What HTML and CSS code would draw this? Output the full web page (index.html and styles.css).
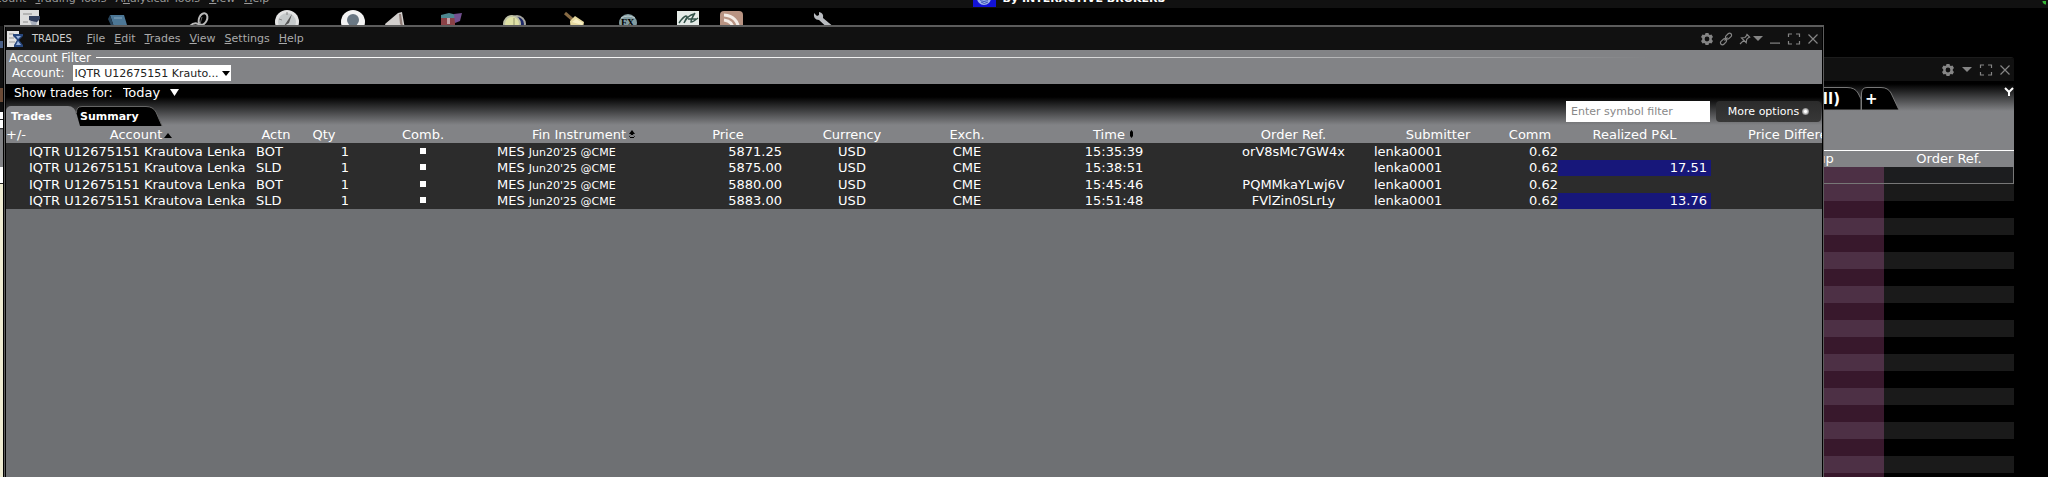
FILE: index.html
```
<!DOCTYPE html>
<html lang="en">
<head>
    <meta charset="UTF-8">
    <meta name="viewport" content="width=device-width, initial-scale=1.0">
    <title>Trades</title>
    <link rel="stylesheet" href="styles.css">
</head>
<body>
    <svg class="sprite" width="0" height="0" aria-hidden="true">
        <symbol id="gear" viewBox="0 0 14 14">
            <path fill="currentColor" fill-rule="evenodd" d="M5.5 1h3l.4 1.6 1 .5 1.6-.6 1.5 2.6-1.2 1.2v1.4l1.2 1.2-1.5 2.6-1.6-.6-1 .5-.4 1.6h-3l-.4-1.6-1-.5-1.6.6L1 8.900l1.200-1.200V6.300L1 5.100l1.500-2.600 1.600.6 1-.5zM7 4.600a2.400 2.400 0 1 0 0 4.800a2.400 2.400 0 0 0 0-4.800z"/>
        </symbol>
        <symbol id="link" viewBox="0 0 14 14">
            <g fill="none" stroke="currentColor" stroke-width="1.200">
                <rect x="6" y="2.200" width="7" height="4" rx="2" transform="rotate(-45 9.500 4.200)"/>
                <rect x="1" y="7.800" width="7" height="4" rx="2" transform="rotate(-45 4.500 9.800)"/>
                <path d="M5.500 8.500l3-3"/>
            </g>
        </symbol>
        <symbol id="pin" viewBox="0 0 14 14">
            <path fill="none" stroke="currentColor" stroke-width="1.200" d="M8.500 2l3.700 3.700M9.300 2.800L7 5.500l-3.500.5 4.700 4.700.500-3.500 2.700-2.300M5.700 8.300L2 12"/>
        </symbol>
        <symbol id="down" viewBox="0 0 10 14"><path fill="currentColor" d="M0 4h10l-5 5z"/></symbol>
        <symbol id="minimize" viewBox="0 0 14 14"><path fill="currentColor" d="M2 10.500h10v1.200H2z"/></symbol>
        <symbol id="expand" viewBox="0 0 14 14">
            <path fill="none" stroke="currentColor" stroke-width="1.200" d="M1.500 5V2H5M9 2h3.500v3M12.500 9v3H9M5 12H1.500V9"/>
        </symbol>
        <symbol id="close" viewBox="0 0 14 14">
            <path fill="none" stroke="currentColor" stroke-width="1.200" d="M2.500 2.500l9 9M11.500 2.500l-9 9"/>
        </symbol>
    </svg>

    <div class="desktop">
        <header class="app-bar">
            <nav class="app-menu">
                <a href="#">Account</a>
                <a href="#"><u>T</u>rading Tools</a>
                <a href="#">A<u>n</u>alytical Tools</a>
                <a href="#"><u>V</u>iew</a>
                <a href="#"><u>H</u>elp</a>
            </nav>
            <div class="brand">
                <svg width="23" height="14" viewBox="0 0 23 14"><path fill="#1212d8" d="M0 0h23v14H0z"/><circle cx="11" cy="5" r="7" fill="#9fb4ea"/><path d="M6 6q5 5 10 0M8 9q3 3 7 0" stroke="#3d55b8" fill="none"/></svg>
                <span>By INTERACTIVE BROKERS</span>
            </div>
            <span class="status"></span>
        </header>

        <div class="toolbar">
            <button aria-label="Orders"><svg width="24" height="24"><path fill="#dcdcdc" d="M2 0h19v24H2z"/><path stroke="#8c8c8c" d="M5 4h9M5 12h5"/><path fill="#33405e" d="M11 6h11v3l-4 4-7-3z"/><path fill="#a9b0bd" d="M12 11l7 1-1 4h-4z"/></svg></button>
            <button aria-label="Book"><svg width="24" height="24"><path fill="#4c7796" d="M4 5h14l3 10-13 2z"/><path fill="#27445c" d="M4 5l4 12v5L2 9z"/><path stroke="#87a9bf" d="M8 8h8"/></svg></button>
            <button aria-label="Link"><svg width="24" height="24" fill="none" stroke="#b9b9b9" stroke-width="2"><ellipse cx="15" cy="9" rx="4" ry="6" transform="rotate(25 15 9)"/><path d="M2 16q5-5 10-1"/><path stroke="#666" stroke-width="1" d="M14 7l-2 7"/></svg></button>
            <button aria-label="Compass"><svg width="24" height="24"><circle cx="12" cy="12" r="12" fill="#e4e4e4"/><circle cx="12" cy="12" r="9" fill="#c5c9ca"/><path d="M17 4l-3 9-5 3z" fill="#555"/><path d="M12 2v3M4 9l3 1" stroke="#888"/></svg></button>
            <button aria-label="Profile"><svg width="24" height="24"><circle cx="12" cy="12" r="12" fill="#f3f3f3"/><circle cx="12" cy="10" r="6" fill="#697783"/><path fill="#697783" d="M4 20q8-8 16 0z"/></svg></button>
            <button aria-label="Alerts"><svg width="24" height="24"><path fill="#d2cfcd" d="M15 3l4-1 3 17-6-3-13 1-1-3z"/><path fill="#927f79" d="M16 4l2 0 2 13-3-3z"/></svg></button>
            <button aria-label="Portfolio"><svg width="24" height="24"><path fill="#4d8790" d="M2 5l8-2 8 2-2 5H2z"/><path fill="#8b4146" d="M2 8h14v14H2z"/><path fill="#735090" d="M15 4l8-1-2 8-5 2z"/><path fill="#c2a3a8" d="M8 8h3v6H8z"/></svg></button>
            <button aria-label="Compare"><svg width="24" height="24"><circle cx="15" cy="14" r="9" fill="#a7a7a0"/><circle cx="15" cy="14" r="7" fill="#1c2767"/><circle cx="10" cy="14" r="9" fill="#c0c2a6"/><circle cx="10" cy="14" r="7" fill="#dfe1a5"/><path stroke="#92956b" d="M12 8v8"/></svg></button>
            <button aria-label="Clean"><svg width="24" height="24"><path stroke="#876a43" stroke-width="3" d="M3 3l8 7"/><path fill="#e6d9a0" d="M8 11l5-5 9 6-2 12H9z"/><path fill="#f8efc5" d="M10 12l4-3 7 4-1 2z"/></svg></button>
            <button aria-label="Exchange"><svg width="24" height="24"><circle cx="12" cy="13" r="9" fill="#839ca1"/><path d="M5 8q7-4 14 0" stroke="#c0ced0" fill="none"/><text x="5" y="16" class="fx">FX</text></svg></button>
            <button aria-label="Chart"><svg width="24" height="24"><path fill="#e5ebe8" d="M1 1h22v23H1z"/><path fill="none" stroke="#34534a" stroke-width="1.500" d="M3 13q4-6 7-7 2 0 0 3l-2 4q4-8 10-9M19 3q-4 6-4 9 2 0 7-4M12 9h8"/></svg></button>
            <button aria-label="News feed"><svg width="24" height="24"><rect x="1" y="1" width="23" height="23" rx="4" fill="#b89382"/><path fill="none" stroke="#f4ece6" stroke-width="3" d="M5 5q14 1 15 16M5 10q9 1 10 11"/></svg></button>
            <button aria-label="Configure"><svg width="24" height="24"><path fill="#b9bcc0" d="M3 3l3 3 2-1V2q5 1 4 6l12 10-3 4L8 10Q2 10 3 3z"/></svg></button>
        </div>

        <div class="strip"></div>

        <!-- order window, behind -->
        <section class="window orders">
            <div class="titlebar">
                <div class="controls">
                    <button aria-label="Settings"><svg width="14" height="14"><use href="#gear"/></svg></button>
                    <button aria-label="Menu"><svg width="14" height="14"><use href="#down"/></svg></button>
                    <button aria-label="Maximize"><svg width="14" height="14"><use href="#expand"/></svg></button>
                    <button aria-label="Close"><svg width="14" height="14"><use href="#close"/></svg></button>
                </div>
            </div>
            <div class="orders-head">
                <button class="tab tab-all">(All)</button>
                <button class="tab tab-add">+</button>
                <svg class="funnel" width="10" height="10" viewBox="0 0 10 10"><path d="M1 1l4 4 4-4M5 5v4" fill="none" stroke="#fff" stroke-width="2"/></svg>
            </div>
            <table class="orders-table">
                <thead>
                    <tr><th class="group">Group</th><th>Order Ref.</th></tr>
                </thead>
                <tbody>
                    <tr class="selected"><td></td><td></td></tr>
                    <tr class="light"><td></td><td></td></tr>
                    <tr><td></td><td></td></tr>
                    <tr class="light"><td></td><td></td></tr>
                    <tr><td></td><td></td></tr>
                    <tr class="light"><td></td><td></td></tr>
                    <tr><td></td><td></td></tr>
                    <tr class="light"><td></td><td></td></tr>
                    <tr><td></td><td></td></tr>
                    <tr class="light"><td></td><td></td></tr>
                    <tr><td></td><td></td></tr>
                    <tr class="light"><td></td><td></td></tr>
                    <tr><td></td><td></td></tr>
                    <tr class="light"><td></td><td></td></tr>
                    <tr><td></td><td></td></tr>
                    <tr class="light"><td></td><td></td></tr>
                    <tr><td></td><td></td></tr>
                    <tr class="light"><td></td><td></td></tr>
                    <tr><td></td><td></td></tr>
                </tbody>
            </table>
        </section>

        <!-- trades window -->
        <section class="window trades">
            <div class="titlebar">
                <svg class="logo" width="18" height="18" viewBox="0 0 18 18"><path fill="#e4e4e4" d="M1 1h12v16H1z"/><path stroke="#999" d="M3 4h5M3 8h5M3 12h6"/><path fill="#27477d" d="M7 4h10v2l-4 4 4 5v2H8v-2l3-5-4-4z"/><path fill="#9cb6e0" d="M10 6h5l-3 3zM12 11l3 4h-5z"/></svg>
                <h1>TRADES</h1>
                <nav class="menu">
                    <a href="#"><u>F</u>ile</a>
                    <a href="#"><u>E</u>dit</a>
                    <a href="#"><u>T</u>rades</a>
                    <a href="#"><u>V</u>iew</a>
                    <a href="#"><u>S</u>ettings</a>
                    <a href="#"><u>H</u>elp</a>
                </nav>
                <div class="controls">
                    <button aria-label="Settings"><svg width="14" height="14"><use href="#gear"/></svg></button>
                    <button aria-label="Link"><svg width="14" height="14"><use href="#link"/></svg></button>
                    <button class="pin" aria-label="Pin"><svg width="14" height="14"><use href="#pin"/></svg><svg width="10" height="14"><use href="#down"/></svg></button>
                    <button aria-label="Minimize"><svg width="14" height="14"><use href="#minimize"/></svg></button>
                    <button aria-label="Maximize"><svg width="14" height="14"><use href="#expand"/></svg></button>
                    <button aria-label="Close"><svg width="14" height="14"><use href="#close"/></svg></button>
                </div>
            </div>

            <div class="account-filter">
                <div class="legend">Account Filter</div>
                <div class="account-row">
                    <label for="account">Account:</label>
                    <span class="dropdown">
                        <select id="account"><option>IQTR U12675151 Krauto...</option></select>
                        <svg width="8" height="5"><path d="M0 0h8l-4 5z"/></svg>
                    </span>
                </div>
            </div>

            <div class="head">
                <div class="head-left">
                    <div class="period-row">
                        <label for="period">Show trades for:</label>
                        <span class="dropdown">
                            <select id="period"><option>Today</option></select>
                            <svg width="9" height="7"><path fill="#fff" d="M0 0h9l-4.500 7z"/></svg>
                        </span>
                    </div>
                    <div class="tabs">
                        <button class="tab active">Trades</button>
                        <button class="tab tab-summary">Summary</button>
                    </div>
                </div>
                <div class="head-right">
                    <input type="text" placeholder="Enter symbol filter" aria-label="Symbol filter">
                    <button class="more">More options<span class="dot"></span></button>
                </div>
            </div>

            <div class="table-wrap">
                <table class="trades-table">
                    <colgroup>
                        <col class="c-sign"><col class="c-account"><col class="c-actn"><col class="c-qty"><col class="c-comb"><col class="c-fin"><col class="c-price"><col class="c-currency"><col class="c-exch"><col class="c-time"><col class="c-ref"><col class="c-submitter"><col class="c-comm"><col class="c-pnl"><col class="c-diff">
                    </colgroup>
                    <thead>
                        <tr>
                            <th class="left">+/-</th>
                            <th>Account<svg width="9" height="5"><path d="M1 5h8L5 0z"/></svg></th>
                            <th>Actn</th>
                            <th>Qty</th>
                            <th>Comb.</th>
                            <th>Fin Instrument<svg width="9" height="8"><path d="M2 4h6L5 0zM2 7h6L5 3zM3 5h4v3H3z"/></svg></th>
                            <th>Price</th>
                            <th>Currency</th>
                            <th>Exch.</th>
                            <th>Time<svg width="9" height="8"><path d="M4 2l1.500-2L7 2v4L5.500 8 4 6z"/></svg></th>
                            <th>Order Ref.</th>
                            <th>Submitter</th>
                            <th>Comm</th>
                            <th>Realized P&amp;L</th>
                            <th>Price Difference</th>
                        </tr>
                    </thead>
                    <tbody>
                        <tr>
                            <td></td><td class="left">IQTR U12675151 Krautova Lenka</td><td class="left actn">BOT</td><td class="right">1</td>
                            <td><span class="square"></span></td><td class="left">MES <small>Jun20'25 @CME</small></td><td class="right price">5871.25</td>
                            <td>USD</td><td>CME</td><td>15:35:39</td><td>orV8sMc7GW4x</td><td class="left">lenka0001</td>
                            <td class="right">0.62</td><td></td><td></td>
                        </tr>
                        <tr>
                            <td></td><td class="left">IQTR U12675151 Krautova Lenka</td><td class="left actn">SLD</td><td class="right">1</td>
                            <td><span class="square"></span></td><td class="left">MES <small>Jun20'25 @CME</small></td><td class="right price">5875.00</td>
                            <td>USD</td><td>CME</td><td>15:38:51</td><td></td><td class="left">lenka0001</td>
                            <td class="right">0.62</td><td class="right pnl">17.51</td><td></td>
                        </tr>
                        <tr>
                            <td></td><td class="left">IQTR U12675151 Krautova Lenka</td><td class="left actn">BOT</td><td class="right">1</td>
                            <td><span class="square"></span></td><td class="left">MES <small>Jun20'25 @CME</small></td><td class="right price">5880.00</td>
                            <td>USD</td><td>CME</td><td>15:45:46</td><td>PQMMkaYLwj6V</td><td class="left">lenka0001</td>
                            <td class="right">0.62</td><td></td><td></td>
                        </tr>
                        <tr>
                            <td></td><td class="left">IQTR U12675151 Krautova Lenka</td><td class="left actn">SLD</td><td class="right">1</td>
                            <td><span class="square"></span></td><td class="left">MES <small>Jun20'25 @CME</small></td><td class="right price">5883.00</td>
                            <td>USD</td><td>CME</td><td>15:51:48</td><td>FVlZin0SLrLy</td><td class="left">lenka0001</td>
                            <td class="right">0.62</td><td class="right pnl">13.76</td><td></td>
                        </tr>
                    </tbody>
                </table>
            </div>
        </section>
    </div>
</body>
</html>
```
FILE: styles.css
```
* {
    box-sizing: border-box;
}

body {
    margin: 0;
    background: #000;
    color: #fff;
    font-family: "DejaVu Sans", Verdana, sans-serif;
    font-size: 13px;
}

button, input, select {
    font-family: inherit;
    margin: 0;
    padding: 0;
    border: none;
    background: none;
    color: inherit;
}

a {
    color: inherit;
    text-decoration: none;
}

svg {
    display: block;
}

.sprite {
    position: absolute;
}

.desktop {
    position: relative;
    height: 100vh;
    overflow: hidden;
}

/* main application bar */
.app-bar {
    display: flex;
    align-items: flex-end;
    justify-content: space-between;
    height: 8px;
    padding-bottom: 1px;
    background: #111;
    overflow: hidden;
}

.app-menu {
    display: flex;
    flex: 1;
    gap: 9px;
    margin-left: -18px;
    color: #999;
    font-size: 11px;
    line-height: 16px;
}

.brand {
    display: flex;
    align-items: flex-end;
    gap: 7px;
    margin-left: 110px;
    font-size: 11px;
    font-weight: bold;
    line-height: 16px;
}

.status {
    flex: 1;
    height: 6px;
    margin-right: 2px;
    background: radial-gradient(circle at right top, #35b535 3px, transparent 4px);
}

.toolbar {
    display: grid;
    grid-template-columns: 88px 82px 87px 66px 42px 56px 63px 60px 54px 60px 43px 92px 24px;
    padding: 2px 18px;
}

.fx {
    font: bold 10px "Liberation Serif", serif;
}

/* edge of the window lying further left */
.strip {
    position: absolute;
    top: 26px;
    bottom: 0;
    left: 0;
    width: 3px;
    background: linear-gradient(#111 15px, #4a5f85 15px, #4a5f85 22px, #111 22px, #111 62px, #6b4a35 62px, #6b4a35 76px, #111 76px, #111 86px, #fff 86px, #fff 93px, #222 93px, #222 94px, #fff 94px, #fff 102px, #222 102px, #828386 104px, #828386 141px, #fff 141px, #fff 157px, #222 157px, #222 158px, #efecd2 158px);
}

/* windows */
.window {
    position: absolute;
    bottom: 0;
    left: 4px;
    overflow: hidden;
}

.titlebar {
    display: flex;
    align-items: center;
    height: 23px;
    background: #111;
    color: #aaa;
}

.controls {
    display: flex;
    gap: 5px;
    margin-left: auto;
    padding-right: 2px;
    color: #858585;
}

.controls button {
    display: flex;
}

.tab {
    height: 21px;
    background: no-repeat left top / 100% 100%;
    font-size: 11px;
    font-weight: bold;
    text-align: left;
}

.orders {
    top: 57px;
    right: 34px;
    border-top: 1px solid #1c1c1c;
    border-radius: 0 3px 0 0;
}

.orders-head {
    display: flex;
    justify-content: flex-end;
    align-items: flex-start;
    height: 69px;
    padding-top: 6px;
    background: linear-gradient(#000 3px, #828386 30px);
}

.orders-head .tab {
    height: 23px;
    font-size: 15px;
}

.tab-all {
    width: 90px;
    padding-right: 21px;
    text-align: right;
    background-image: url("data:image/svg+xml,%3Csvg xmlns='http://www.w3.org/2000/svg' viewBox='0 0 90 23' preserveAspectRatio='none'%3E%3Cpath d='M0 23V4Q0 .5 4 .5H76Q84 .5 87 6L90 12V23z' stroke='%23777'/%3E%3C/svg%3E");
}

.tab-add {
    width: 38px;
    padding-left: 4px;
    background-image: url("data:image/svg+xml,%3Csvg xmlns='http://www.w3.org/2000/svg' viewBox='0 0 38 23' preserveAspectRatio='none'%3E%3Cpath d='M.5 23V6Q1 .5 6 .5H20Q27 .5 30 6L38 23z' stroke='%23777'/%3E%3C/svg%3E");
}

.funnel {
    margin-left: 105px;
}

.orders-table {
    width: 270px;
    margin-left: auto;
    border-spacing: 0;
    table-layout: fixed;
}

.orders-table .group {
    width: 140px;
}

.orders-table th {
    height: 17px;
    padding: 0;
    border-top: 1px solid #fff;
    background: #828386;
    font-weight: normal;
    line-height: 16px;
}

.orders-table td {
    height: 17px;
    padding: 0;
}

.orders-table td:first-child {
    background: #38182c;
}

.orders-table .light td {
    background: #1a1a1a;
}

.orders-table .selected td {
    background: #1c1d1f;
    border-bottom: 1px solid #777;
}

.orders-table .selected td:last-child {
    border-right: 1px solid #777;
}

.orders-table .light td:first-child,
.orders-table .selected td:first-child {
    background: #4d3045;
}

/* trades window */
.trades {
    top: 25px;
    right: 224px;
    padding: 0 1px;
    border: 1px solid #5c5c5c;
    border-top-width: 2px;
    border-bottom: none;
    background: linear-gradient(#6e7073, #6e7073) content-box, #000;
}

.trades h1 {
    margin: 0 15px 0 8px;
    color: #d0d0d0;
    font-size: 10px;
    font-weight: normal;
}

.menu {
    display: flex;
    gap: 9px;
    font-size: 11px;
}

.trades .pin {
    gap: 1px;
}

.account-filter {
    height: 34px;
    background: #828386;
    font-size: 12px;
}

.legend {
    display: flex;
    align-items: center;
    gap: 5px;
    height: 15px;
    padding-left: 3px;
}

.legend::after {
    content: "";
    flex: 1;
    height: 1px;
    background: linear-gradient(90deg, #fff, #eee 50%, #828386 90%);
}

.account-row {
    display: flex;
    align-items: center;
    gap: 8px;
    padding-left: 6px;
    line-height: 16px;
}

.dropdown {
    display: grid;
    align-items: center;
}

.dropdown select,
.dropdown svg {
    grid-area: 1 / 1;
}

.dropdown svg {
    justify-self: end;
    pointer-events: none;
}

.dropdown select {
    appearance: none;
}

#account {
    width: 158px;
    height: 16px;
    padding-left: 2px;
    background: #fff;
    color: #222;
    font-size: 11px;
}

.account-row svg {
    margin-right: 1px;
}

.head {
    display: flex;
    justify-content: space-between;
    align-items: flex-end;
    height: 43px;
    background: linear-gradient(#000 13px, #828386 41px);
}

.period-row {
    display: flex;
    align-items: center;
    gap: 8px;
    height: 22px;
    padding: 0 0 5px 8px;
    font-size: 12px;
}

#period {
    width: 58px;
    padding-left: 2px;
    font-size: 13px;
}

.tabs {
    display: flex;
    align-items: flex-start;
}

.active {
    width: 70px;
    padding-left: 5px;
    background-color: #828386;
    border-top-left-radius: 5px;
    border-top-right-radius: 8px;
}

.tab-summary {
    width: 87px;
    height: 20px;
    padding-left: 4px;
    background-image: url("data:image/svg+xml,%3Csvg xmlns='http://www.w3.org/2000/svg' viewBox='0 0 87 20' preserveAspectRatio='none'%3E%3Cpath fill='%23828386' d='M0 6L4 20H0z'/%3E%3Cpath d='M4 20L.5 7Q0 .5 6 .5H70Q77 .5 80 6L86 20z'/%3E%3Cpath fill='none' stroke='%23666' d='M.5 7Q0 .5 6 .5H70Q77 .5 80 6L86 20'/%3E%3C/svg%3E");
}

.head-right {
    display: flex;
    gap: 6px;
    padding: 0 1px 5px 0;
    font-size: 11px;
}

.head-right input {
    width: 144px;
    height: 21px;
    padding-left: 5px;
    background: #fff;
    color: #333;
    font-size: 11px;
}

.head-right input::placeholder {
    color: #888;
}

.more {
    display: flex;
    align-items: center;
    justify-content: center;
    gap: 3px;
    width: 105px;
    height: 21px;
    border-radius: 4px;
    background: linear-gradient(#2b2b2b, #383838);
    font-size: 11px;
}

.dot {
    width: 7px;
    height: 7px;
    border-radius: 50%;
    background: radial-gradient(#fff 1px, #666 4px);
}

.table-wrap {
    overflow: hidden;
}

.trades-table {
    width: 1882px;
    border-spacing: 0;
    table-layout: fixed;
    white-space: nowrap;
}

.trades-table th,
.trades-table td {
    height: 16px;
    padding: 0;
    line-height: 16px;
    text-align: center;
}

.trades-table th {
    background: #828386;
    font-weight: normal;
}

.trades-table th svg {
    display: inline-block;
    margin-left: 1px;
    vertical-align: 1px;
}

.trades-table td {
    background: #2c2c2c;
}

/* rows alternate 17 and 16 pixels */
.trades-table tbody tr:nth-child(odd) td {
    height: 17px;
}

.trades-table .left {
    text-align: left;
}

.trades-table .right {
    text-align: right;
}

.trades-table .actn {
    padding-left: 3px;
}

.trades-table .price {
    padding-right: 3px;
}

.trades-table .pnl {
    padding-right: 4px;
    background: #17177a;
}

.trades-table small {
    font-size: 11px;
    line-height: 11px;
}

.square {
    display: inline-block;
    width: 6px;
    height: 6px;
    background: #fff;
    vertical-align: 2px;
}

.c-sign { width: 23px; }
.c-account { width: 224px; }
.c-actn { width: 46px; }
.c-qty { width: 50px; }
.c-comb { width: 148px; }
.c-fin { width: 174px; }
.c-price { width: 114px; }
.c-currency { width: 134px; }
.c-exch { width: 96px; }
.c-time { width: 198px; }
.c-ref { width: 161px; }
.c-submitter { width: 128px; }
.c-comm { width: 56px; }
.c-pnl { width: 153px; }
.c-diff { width: 177px; }
```
